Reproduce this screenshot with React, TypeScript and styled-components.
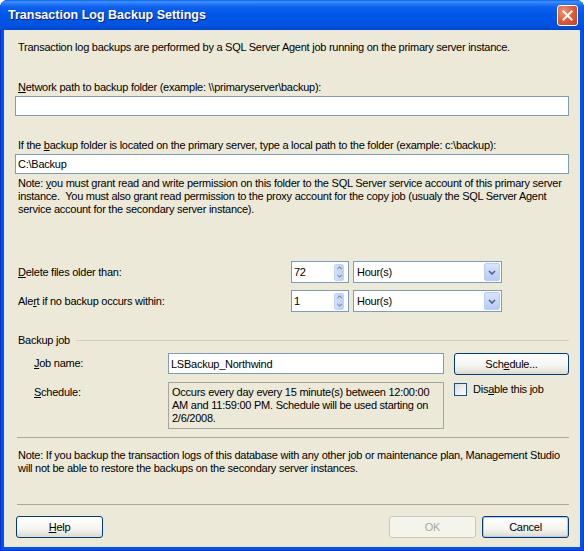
import React from 'react'
import styled, { createGlobalStyle } from 'styled-components'

const GlobalStyle = createGlobalStyle`
  html, body {
    margin: 0;
    padding: 0;
    background: #ffffff;
  }
  body {
    font-family: 'Liberation Sans', Arial, sans-serif;
    font-size: 11px;
    letter-spacing: -0.25px;
  }
`

const Window = styled.div`
  width: 584px;
  height: 551px;
  box-sizing: border-box;
  display: flex;
  flex-direction: column;
  background: #0054e3;
  border-radius: 8px 8px 0 0;
  box-shadow: inset 0 0 0 1px #0831d9;
  overflow: hidden;
`

const TitleBar = styled.div`
  height: 30px;
  flex: none;
  display: flex;
  align-items: center;
  justify-content: space-between;
  padding: 0 6px 0 8px;
  background: linear-gradient(
    to bottom,
    #0a5ee8 0%,
    #3e94ff 6%,
    #2a7af9 12%,
    #0b60ef 24%,
    #0057e6 50%,
    #0054e3 82%,
    #0046d2 100%
  );
`

const Title = styled.span`
  color: #ffffff;
  font-family: 'Liberation Sans', Arial, sans-serif;
  font-weight: bold;
  font-size: 12.5px;
  letter-spacing: 0;
  text-shadow: 1px 1px 0 #0f1c8a;
`

const CloseButton = styled.div`
  width: 21px;
  height: 21px;
  box-sizing: border-box;
  margin-top: 1px;
  border: 1px solid #ffffff;
  border-radius: 3px;
  background: radial-gradient(circle at 30% 30%, #f0947a 0%, #e2603c 45%, #c63f19 100%);
  display: flex;
  align-items: center;
  justify-content: center;
`

const Body = styled.div`
  flex: 1;
  margin: 0 4px 4px 4px;
  background: #ece9d8;
  padding: 11px 11px 9px 11px;
  display: flex;
  flex-direction: column;
  color: #000000;
`

const Text = styled.div<{ $top: number }>`
  margin-top: ${p => p.$top}px;
  padding-left: 3px;
  line-height: 13px;
  white-space: nowrap;
`

const TextInput = styled.input<{ $top?: number; $height?: number }>`
  display: block;
  margin: ${p => p.$top ?? 0}px 0 0 0;
  width: 100%;
  height: ${p => p.$height ?? 20}px;
  box-sizing: border-box;
  border: 1px solid #7f9db9;
  background: #ffffff;
  padding: 0 2px;
  font-family: 'Liberation Sans', Arial, sans-serif;
  font-size: 11px;
  letter-spacing: inherit;
  color: #000000;
  outline: none;
`

const OptionRow = styled.div<{ $top: number }>`
  margin-top: ${p => p.$top}px;
  display: grid;
  grid-template-columns: 272px 58px 149px;
  column-gap: 4px;
  align-items: center;
  height: 22px;
`

const RowLabel = styled.span`
  padding-left: 3px;
`

const Spinner = styled.div`
  height: 22px;
  box-sizing: border-box;
  border: 1px solid #7f9db9;
  background: #ffffff;
  display: flex;
  align-items: center;
  justify-content: space-between;
  padding: 0 4px 0 2px;
`

const SpinButton = styled.div`
  width: 10px;
  height: 17px;
  box-sizing: border-box;
  border: 1px solid #c3d3f7;
  border-radius: 2px;
  background: linear-gradient(to right, #d6e2fc, #b9cdf8);
  display: flex;
  flex-direction: column;
  align-items: center;
  justify-content: space-around;
`

const Combo = styled.div`
  height: 22px;
  box-sizing: border-box;
  border: 1px solid #7f9db9;
  background: #ffffff;
  display: flex;
  align-items: center;
  justify-content: space-between;
  padding: 0 1px 0 3px;
`

const DropButton = styled.div`
  width: 16px;
  height: 18px;
  box-sizing: border-box;
  border: 1px solid #bacbf4;
  border-radius: 2px;
  background: linear-gradient(to bottom, #d8e4fd, #b6cbf8);
  display: flex;
  align-items: center;
  justify-content: center;
`

const GroupHeader = styled.div<{ $top: number }>`
  margin-top: ${p => p.$top}px;
  display: flex;
  align-items: center;
  line-height: 13px;
  padding-left: 3px;

  &::after {
    content: '';
    flex: 1;
    height: 1px;
    margin-left: 6px;
    background: #d0d0bf;
  }
`

const JobGrid = styled.div<{ $top: number }>`
  margin-top: ${p => p.$top}px;
  display: grid;
  grid-template-columns: 143px 276px 115px;
  grid-template-rows: 22px 47px;
  column-gap: 10px;
  row-gap: 7px;
`

const JobLabel = styled.span<{ $pad: number }>`
  padding-left: 19px;
  padding-top: ${p => p.$pad}px;
  line-height: 13px;
`

const ScheduleBox = styled.div`
  box-sizing: border-box;
  border: 1px solid #a5a5a0;
  background: #ece9d8;
  padding: 3px 3px 0 3px;
  line-height: 13px;
  white-space: nowrap;
`

const CheckRow = styled.label`
  display: flex;
  align-items: flex-start;
  gap: 6px;
  padding-top: 1px;
  line-height: 13px;
`

const CheckBox = styled.span`
  width: 13px;
  height: 13px;
  box-sizing: border-box;
  border: 1px solid #1c5180;
  background: linear-gradient(135deg, #dcdcd7, #ffffff);
  flex: none;
`

const Separator = styled.div<{ $top: number }>`
  margin: ${p => p.$top}px 0 0 2px;
  height: 1px;
  background: #aca899;
  flex: none;
`

const ButtonRow = styled.div<{ $top: number }>`
  margin-top: ${p => p.$top}px;
  display: flex;
  justify-content: space-between;
  padding-left: 1px;
`

const ButtonGroup = styled.div`
  display: flex;
  gap: 6px;
`

const Button = styled.button<{ $width: number; $default?: boolean }>`
  width: ${p => p.$width}px;
  height: 22px;
  box-sizing: border-box;
  border: 1px solid #003c74;
  border-radius: 3px;
  background: linear-gradient(to bottom, #ffffff 0%, #f4f4f0 60%, #e3e1d8 90%, #d6d0c5 100%);
  box-shadow: ${p => (p.$default ? 'inset 0 0 0 1px #b3c9ef' : 'inset 0 -1px 0 #e0ddd2')};
  font-family: 'Liberation Sans', Arial, sans-serif;
  font-size: 11px;
  letter-spacing: inherit;
  color: #000000;
  padding: 0;

  &:disabled {
    border-color: #c9c7ba;
    background: #f5f4ea;
    box-shadow: none;
    color: #aca899;
  }
`

const Arrow = ({ up }: { up?: boolean }) => (
  <svg width={5} height={4} viewBox="0 0 7 4">
    <path
      d={up ? 'M0.5 3.5 L3.5 0.5 L6.5 3.5' : 'M0.5 0.5 L3.5 3.5 L6.5 0.5'}
      fill="none"
      stroke="#4d6185"
      strokeWidth="1.3"
    />
  </svg>
)

const Spin = ({ value }: { value: string }) => (
  <Spinner>
    <span>{value}</span>
    <SpinButton>
      <Arrow up />
      <Arrow />
    </SpinButton>
  </Spinner>
)

const Select = ({ value }: { value: string }) => (
  <Combo>
    <span>{value}</span>
    <DropButton>
      <svg width="8" height="5" viewBox="0 0 8 5">
        <path d="M1 1 L4 4 L7 1" fill="none" stroke="#4d6185" strokeWidth="1.6" />
      </svg>
    </DropButton>
  </Combo>
)

const App: React.FC = () => {
  return (
    <>
      <GlobalStyle />
      <Window>
        <TitleBar>
          <Title>Transaction Log Backup Settings</Title>
          <CloseButton>
            <svg width="11" height="11" viewBox="0 0 11 11">
              <path d="M1.5 1.5 L9.5 9.5 M9.5 1.5 L1.5 9.5" stroke="#ffffff" strokeWidth="2" strokeLinecap="square" />
            </svg>
          </CloseButton>
        </TitleBar>
        <Body>
          <Text $top={0}>
            Transaction log backups are performed by a SQL Server Agent job running on the primary server instance.
          </Text>
          <Text $top={27}>
            <u>N</u>etwork path to backup folder (example: \\primaryserver\backup):
          </Text>
          <TextInput $top={2} defaultValue="" />
          <Text $top={23}>
            If the <u>b</u>ackup folder is located on the primary server, type a local path to the folder (example: c:\backup):
          </Text>
          <TextInput $top={2} defaultValue="C:\Backup" />
          <Text $top={3}>
            Note: <u>y</u>ou must grant read and write permission on this folder to the SQL Server service account of this primary server
            <br />
            instance.&nbsp; You must also grant read permission to the proxy account for the copy job (usualy the SQL Server Agent
            <br />
            service account for the secondary server instance).
          </Text>

          <OptionRow $top={45}>
            <RowLabel>
              <u>D</u>elete files older than:
            </RowLabel>
            <Spin value="72" />
            <Select value="Hour(s)" />
          </OptionRow>
          <OptionRow $top={7}>
            <RowLabel>
              Ale<u>r</u>t if no backup occurs within:
            </RowLabel>
            <Spin value="1" />
            <Select value="Hour(s)" />
          </OptionRow>

          <GroupHeader $top={22}>Backup job</GroupHeader>
          <JobGrid $top={6}>
            <JobLabel $pad={4}>
              <u>J</u>ob name:
            </JobLabel>
            <TextInput $height={21} defaultValue="LSBackup_Northwind" />
            <Button $width={115}>
              Sch<u>e</u>dule...
            </Button>
            <JobLabel $pad={4}>
              <u>S</u>chedule:
            </JobLabel>
            <ScheduleBox>
              Occurs every day every 15 minute(s) between 12:00:00
              <br />
              AM and 11:59:00 PM. Schedule will be used starting on
              <br />
              2/6/2008.
            </ScheduleBox>
            <CheckRow>
              <CheckBox />
              <span>
                Dis<u>a</u>ble this job
              </span>
            </CheckRow>
          </JobGrid>

          <Separator $top={8} />
          <Text $top={11}>
            Note: If you backup the transaction logs of this database with any other job or maintenance plan, Management Studio
            <br />
            will not be able to restore the backups on the secondary server instances.
          </Text>
          <Separator $top={29} />

          <ButtonRow $top={11}>
            <Button $width={87}>
              <u>H</u>elp
            </Button>
            <ButtonGroup>
              <Button $width={87} disabled>
                OK
              </Button>
              <Button $width={87} $default>
                Cancel
              </Button>
            </ButtonGroup>
          </ButtonRow>
        </Body>
      </Window>
    </>
  )
}

export default App
